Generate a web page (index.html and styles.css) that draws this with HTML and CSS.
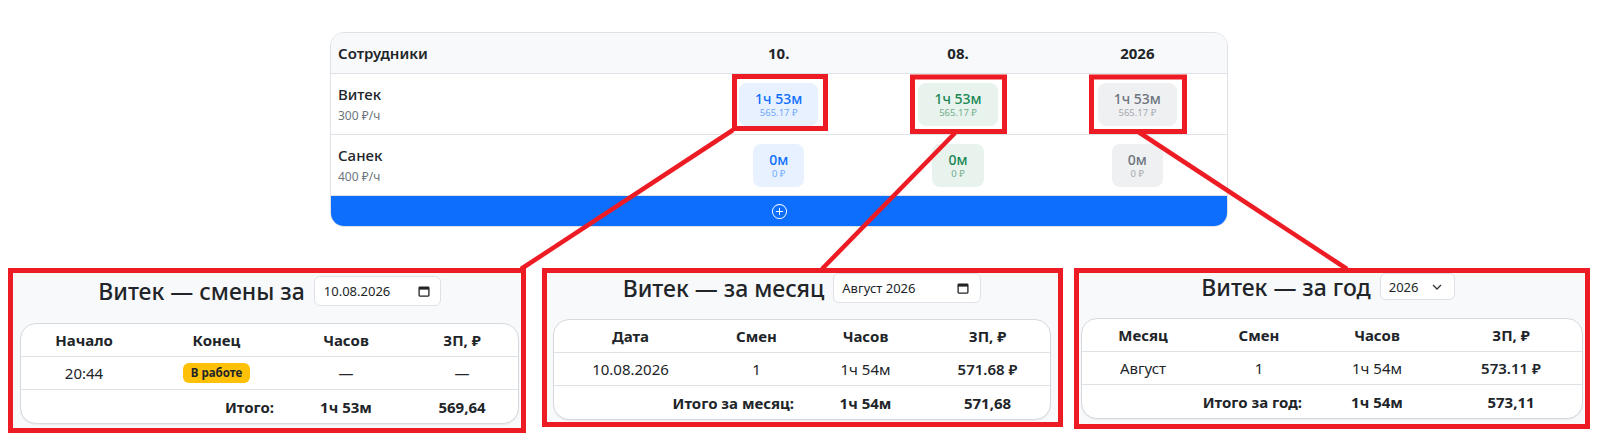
FILE: index.html
```html
<!DOCTYPE html>
<html lang="ru">
<head>
<meta charset="utf-8">
<title>Табель</title>
<link rel="stylesheet" href="styles.css">
</head>
<body>
<div class="page">
  <div class="emp-card">
    <div class="erow ehead">
      <div class="ecell ename-h">Сотрудники</div>
      <div class="ecell ec">10.</div>
      <div class="ecell ec">08.</div>
      <div class="ecell ec">2026</div>
    </div>
    <div class="erow ebody">
      <div class="ecell ename">
        <div class="nm">Витек</div>
        <div class="rate">300 ₽/ч</div>
      </div>
      <div class="ecell ec"><div class="pill blue"><div class="pt">1ч 53м</div><div class="ps">565.17 ₽</div></div></div>
      <div class="ecell ec"><div class="pill green"><div class="pt">1ч 53м</div><div class="ps">565.17 ₽</div></div></div>
      <div class="ecell ec"><div class="pill gray"><div class="pt">1ч 53м</div><div class="ps">565.17 ₽</div></div></div>
    </div>
    <div class="erow ebody">
      <div class="ecell ename">
        <div class="nm">Санек</div>
        <div class="rate">400 ₽/ч</div>
      </div>
      <div class="ecell ec"><div class="pill blue"><div class="pt">0м</div><div class="ps">0 ₽</div></div></div>
      <div class="ecell ec"><div class="pill green"><div class="pt">0м</div><div class="ps">0 ₽</div></div></div>
      <div class="ecell ec"><div class="pill gray"><div class="pt">0м</div><div class="ps">0 ₽</div></div></div>
    </div>
    <div class="add-bar">
      <svg class="plus" viewBox="0 0 16 16" width="15" height="15" fill="#fff"><path d="M8 15A7 7 0 1 1 8 1a7 7 0 0 1 0 14m0 1A8 8 0 1 0 8 0a8 8 0 0 0 0 16"/><path d="M8 4a.5.5 0 0 1 .5.5v3h3a.5.5 0 0 1 0 1h-3v3a.5.5 0 0 1-1 0v-3h-3a.5.5 0 0 1 0-1h3v-3A.5.5 0 0 1 8 4"/></svg>
    </div>
  </div>

  <div class="panels">
    <section class="panel p1">
      <div class="title-row">
        <h4 class="ptitle">Витек — смены за</h4>
        <div class="fake-input fi-date"><span>10.08.2026</span>
          <svg class="cal" width="12" height="12" viewBox="0 0 12 12"><rect x="1.1" y="2.1" width="9.8" height="9" rx="0.8" fill="none" stroke="#222" stroke-width="1.3"/><rect x="1" y="2" width="10" height="2.6" fill="#222"/></svg>
        </div>
      </div>
      <div class="tcard">
        <div class="trow th c1"><div>Начало</div><div>Конец</div><div>Часов</div><div>ЗП, ₽</div></div>
        <div class="trow td c1"><div>20:44</div><div><span class="badge">В работе</span></div><div>—</div><div>—</div></div>
        <div class="trow tt c1"><div class="span2">Итого:</div><div>1ч 53м</div><div>569,64</div></div>
      </div>
    </section>

    <section class="panel p2">
      <div class="title-row">
        <h4 class="ptitle">Витек — за месяц</h4>
        <div class="fake-input fi-month"><span>Август 2026</span>
          <svg class="cal" width="12" height="12" viewBox="0 0 12 12"><rect x="1.1" y="2.1" width="9.8" height="9" rx="0.8" fill="none" stroke="#222" stroke-width="1.3"/><rect x="1" y="2" width="10" height="2.6" fill="#222"/></svg>
        </div>
      </div>
      <div class="tcard">
        <div class="trow th c2"><div>Дата</div><div>Смен</div><div>Часов</div><div>ЗП, ₽</div></div>
        <div class="trow td c2"><div>10.08.2026</div><div>1</div><div>1ч 54м</div><div class="semi">571.68 ₽</div></div>
        <div class="trow tt c2"><div class="span2">Итого за месяц:</div><div>1ч 54м</div><div>571,68</div></div>
      </div>
    </section>

    <section class="panel p3">
      <div class="title-row">
        <h4 class="ptitle">Витек — за год</h4>
        <div class="fake-input fi-year"><span>2026</span>
          <svg class="chev" width="10" height="6" viewBox="0 0 10 6"><polyline points="1,1 5,5 9,1" fill="none" stroke="#333" stroke-width="1.3"/></svg>
        </div>
      </div>
      <div class="tcard">
        <div class="trow th c3"><div>Месяц</div><div>Смен</div><div>Часов</div><div>ЗП, ₽</div></div>
        <div class="trow td c3"><div>Август</div><div>1</div><div>1ч 54м</div><div class="semi">573.11 ₽</div></div>
        <div class="trow tt c3"><div class="span2">Итого за год:</div><div>1ч 54м</div><div>573,11</div></div>
      </div>
    </section>
  </div>

  <svg class="annot" width="1602" height="445" viewBox="0 0 1602 445">
    <g fill="none" stroke="#ed1c24" stroke-width="5">
      <rect x="734.5" y="76.5" width="91" height="52"/>
      <rect x="912.5" y="77" width="92" height="54.5"/>
      <rect x="1091.5" y="77" width="93" height="54.5"/>
    </g>
    <g stroke="#ed1c24" stroke-width="4.5" stroke-linecap="butt">
      <line x1="733" y1="130" x2="521" y2="269"/>
      <line x1="955" y1="133" x2="822" y2="269"/>
      <line x1="1137" y1="131" x2="1347" y2="269"/>
    </g>
  </svg>
</div>
</body>
</html>
```

FILE: styles.css
```css
* { box-sizing: border-box; }
html, body { margin: 0; padding: 0; background: #fff; }
body {
  font-family: "Noto Sans", "DejaVu Sans", sans-serif;
  color: #212529;
}
.page {
  position: relative;
  width: 1602px;
  height: 445px;
  overflow: hidden;
  padding-top: 32px;
}

/* ---------- top employee table ---------- */
.emp-card {
  margin-left: 330px;
  width: 898px;
  border: 1px solid #dee2e6;
  border-radius: 14px;
  overflow: hidden;
  background: #fff;
}
.erow {
  display: grid;
  grid-template-columns: 358px 1fr 1fr 1fr;
  border-bottom: 1px solid #dee2e6;
}
.ehead { height: 41px; background: #f8f9fa; }
.ebody { height: 61px; }
.ecell { display: flex; align-items: center; }
.ec { justify-content: center; }
.ehead .ecell { font-size: 15px; font-weight: 700; }
.ehead .ename-h { padding-left: 7px; font-weight: 600; }
.ename { flex-direction: column; align-items: flex-start; justify-content: center; padding-left: 7px; }
.nm { font-size: 15px; font-weight: 500; line-height: 22px; }
.rate { font-size: 12px; color: #6c757d; line-height: 18px; margin-top: 2px; }

.pill {
  border-radius: 8px;
  padding: 6px 16px 6px;
  text-align: center;
  height: 43px;
  display: flex;
  flex-direction: column;
  justify-content: center;
}
.pt { font-size: 14px; font-weight: 500; line-height: 17px; }
.ps { font-size: 9.5px; line-height: 12px; }
.pill.blue { background: #e7f1ff; color: #0d6efd; }
.pill.blue .ps { color: #6ea8fe; }
.pill.green { background: #e8f3ee; color: #198754; }
.pill.green .ps { color: #6fae8d; }
.pill.gray { background: #eff0f2; color: #6c757d; }
.pill.gray .ps { color: #a3a8ad; }

.add-bar {
  height: 30px;
  background: #0d6efd;
  display: flex;
  align-items: center;
  justify-content: center;
}

/* ---------- bottom panels ---------- */
.panels {
  display: flex;
  align-items: flex-start;
  margin-top: 41px;
}
.panel {
  border: 5px solid #ed1c24;
  background: #f8f9fa;
}
.p1 { margin-left: 8px; width: 518px; height: 165px; padding: 3px 0 0 7px; }
.p2 { margin-left: 16px; width: 521px; height: 159px; padding: 0 0 0 6px; }
.p3 { margin-left: 11px; width: 516px; height: 161px; padding: 0 0 0 2px; }

.title-row {
  display: flex;
  align-items: center;
  justify-content: center;
  gap: 9px;
  height: 30px;
}
.p1 .title-row { width: 499px; }
.p2 .title-row { width: 498px; }
.p3 .title-row { width: 494px; height: 27px; }
.p2 .title-row { height: 30px; }

.ptitle {
  margin: 0;
  font-size: 23px;
  font-weight: 500;
  line-height: 30px;
  white-space: nowrap;
}
.fake-input {
  display: flex;
  align-items: center;
  justify-content: space-between;
  background: #fff;
  border: 1px solid #dee2e6;
  border-radius: 6px;
  font-size: 13px;
  color: #212529;
}
.fi-date { width: 127px; height: 30px; padding: 0 10px 0 9px; }
.fi-month { width: 148px; height: 30px; padding: 0 11px 0 8px; }
.fi-year { width: 75px; height: 27px; padding: 0 12px 0 8px; }

.tcard {
  background: #fff;
  border: 1px solid #d6d9dd;
  border-radius: 16px;
  overflow: hidden;
  box-shadow: 0 1px 1px rgba(0,0,0,0.06);
}
.p1 .tcard { width: 499px; margin-top: 17px; }
.p2 .tcard { width: 498px; margin-top: 16px; }
.p3 .tcard { width: 502px; margin-top: 18px; }

.trow {
  display: grid;
  font-size: 15px;
  text-align: center;
}
.trow > div { display: flex; align-items: center; justify-content: center; }
.c1 { grid-template-columns: 126px 139px 120px 1fr; }
.c2 { grid-template-columns: 153px 99px 119px 1fr; }
.c3 { grid-template-columns: 122px 110px 126px 1fr; }
.th { height: 33px; border-bottom: 1px solid #dee2e6; font-weight: 700; }
.td { height: 33px; border-bottom: 1px solid #dee2e6; }
.tt { height: 33px; font-weight: 700; }
.tt .span2 { grid-column: span 2; justify-content: flex-end; padding-right: 12px; }
.semi { font-weight: 600; }

.badge {
  display: inline-block;
  background: #ffc107;
  color: #212529;
  font-size: 11.5px;
  font-weight: 700;
  line-height: 20px;
  padding: 0 8px;
  border-radius: 6px;
}

/* annotation overlay */
.annot {
  position: absolute;
  left: 0;
  top: 0;
  pointer-events: none;
}
```
